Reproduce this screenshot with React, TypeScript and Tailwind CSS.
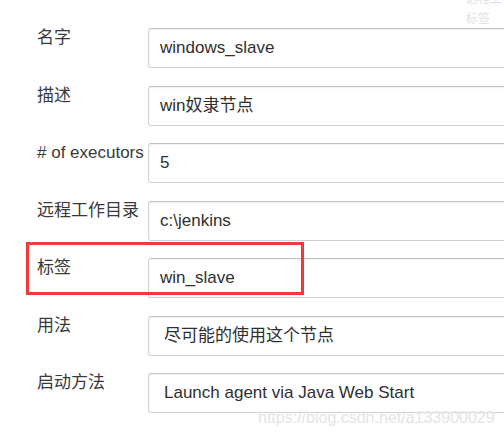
// App.tsx
import React from 'react';

interface Row {
  label: string;
  value: string;
  select?: boolean;
}

const rows: Row[] = [
  { label: '名字', value: 'windows_slave' },
  { label: '描述', value: 'win奴隶节点' },
  { label: '# of executors', value: '5' },
  { label: '远程工作目录', value: 'c:\\jenkins' },
  { label: '标签', value: 'win_slave' },
  { label: '用法', value: '尽可能的使用这个节点', select: true },
  { label: '启动方法', value: 'Launch agent via Java Web Start', select: true },
];

export default function App() {
  return (
    <div
      className="relative w-[504px] h-[435px] overflow-hidden bg-white text-[#333]"
      style={{ fontFamily: '"Liberation Sans", "Noto Sans CJK SC", sans-serif' }}
    >
      {/* faint bits of the page behind, top right */}
      <div className="absolute left-[466px] top-[-8px] text-[12px] leading-[14px] text-[#e0e0e0] whitespace-nowrap">
        远程工作目录
      </div>
      <div className="absolute left-[466px] top-[12px] text-[12px] leading-[14px] text-[#e0e0e0] whitespace-nowrap">
        标签
      </div>

      <div className="flex flex-col gap-[17.5px] pt-[28px] pl-[37px]">
        {rows.map((row, idx) => (
          <div key={idx} className="flex items-start">
            <div className="w-[111px] shrink-0 text-[17px] leading-[20px] text-[#3a3a3a] whitespace-nowrap">
              {row.label}
            </div>
            <div
              className={`shrink-0 w-[420px] h-[40px] flex items-center rounded-[3px] border border-[#d2d2d2] border-t-[#c2c2c2] bg-white shadow-[inset_0_1px_2px_rgba(0,0,0,0.07)] text-[17px] text-[#2f2f2f] whitespace-nowrap ${
                row.select ? 'pl-[15px]' : 'pl-[11px]'
              }`}
            >
              {row.value}
            </div>
          </div>
        ))}
      </div>

      {/* highlight around the label row */}
      <div className="absolute left-[26px] top-[242px] w-[278px] h-[53px] border-[3px] border-[#f23a3a]" />

      {/* watermark */}
      <div
        className="absolute left-[258px] top-[408px] text-[16px] leading-[20px] text-[#e4e4e4] whitespace-nowrap"
        style={{ fontFamily: '"Liberation Sans", sans-serif' }}
      >
        https://blog.csdn.net/a133900029
      </div>
    </div>
  );
}
